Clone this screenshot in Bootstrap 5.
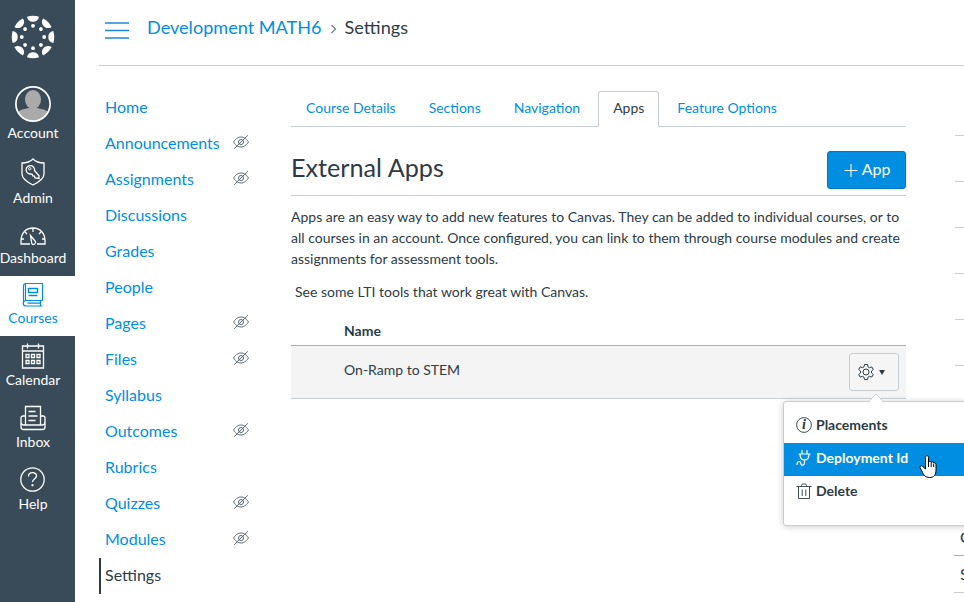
<!DOCTYPE html>
<html lang="en">
<head>
<meta charset="utf-8">
<meta name="viewport" content="width=device-width, initial-scale=1">
<title>Development MATH6: Settings</title>
<link href="https://cdn.jsdelivr.net/npm/bootstrap@5.3.0/dist/css/bootstrap.min.css" rel="stylesheet">
<style>
:root{--ink:#2d3b45;--brand:#008ee2;--line:#c7cdd1}
body{font-family:Lato,"Liberation Sans",sans-serif;color:var(--ink);font-size:14px;line-height:21px}
a{text-decoration:none;color:var(--brand)}
.page{width:964px;height:602px}
.rail{width:75px;background:#394b58}
.rail-item{height:62px;padding-top:6px;padding-right:9px;color:#fff;font-size:14px;line-height:18px}
.rail-item .pic{height:29px}
.rail-logo{height:82px;padding:15px 9px 0 0}
.rail-account{height:72px;padding-top:4px}
.rail-account .pic{height:38px}
.rail-admin{height:60px;padding-top:3px}
.rail-admin .pic{height:32px}
.rail-courses{height:60px;background:#fff;color:var(--brand);padding-top:5px}
.rail-courses .pic{height:28px}
.work{padding-left:24px}
.topbar{height:66px;border-bottom:1px solid var(--line);padding:0 0 9px 6px}
.crumbs{font-size:18.1px;line-height:24px;margin-left:18px;padding-bottom:2px}
.course-nav{width:192px;padding-top:24px}
.course-nav a{height:36px;padding:0 41px 4px 6px;font-size:16px}
.course-nav .current{border-left:2px solid var(--ink);padding-left:4px;color:var(--ink)}
.course-nav .eye{color:#5c6872;margin-bottom:1px}
.panel{width:615px;padding-top:25px}
.settings-tabs{height:36px;border-bottom:1px solid var(--line)}
.settings-tabs .nav-link{height:36px;padding:0 14px;border:1px solid transparent;border-radius:3px 3px 0 0;color:var(--brand);margin-right:3px;line-height:31px}
.settings-tabs .nav-link.active{color:var(--ink);border-color:var(--line);border-bottom-color:#fff;background:#fff}
.title-row{height:69px;padding-bottom:6px;border-bottom:1px solid var(--line)}
.title-row h1{font-size:25.2px;line-height:30px;margin:0 0 7px}
.btn-app{width:79px;height:38px;background:var(--brand);border:1px solid #0079c1;color:#fff;border-radius:3px;font-size:16px;padding:0 0 3px 1px}
.intro{margin:10px 0 12px}
.tool-head{height:44px;padding:18px 0 0 53px;font-weight:700;border-bottom:1px solid #a5afb5}
.tool-row{height:53px;background:#f4f4f4;border-bottom:1px solid var(--line);padding:7px 7px 0 53px}
.tool-name{padding-top:6px}
.gear-btn{width:50px;height:38px;border:1px solid var(--line);border-radius:3px;background:#f5f5f5;padding:0 7px 0 0;gap:4px}
.caret{border:3.5px solid transparent;border-top:5.5px solid var(--ink);border-bottom:0}
.gear-menu{left:783px;top:401px;width:190px;height:125px;background:#fff;border:1px solid var(--line);border-radius:3px;box-shadow:0 1px 6px rgba(0,0,0,.2);padding-top:8px;z-index:2}
.gear-menu a{height:33px;padding:0 0 4px 12px;color:var(--ink);font-weight:700;gap:4px}
.gear-menu .hot{background:var(--brand);color:#fff}
.gear-menu a svg{margin-top:1px}
.menu-tip{left:84px;top:-9px}
.info-i{font:italic bold 14px "Liberation Serif",serif}
.cursor{left:919px;top:454px;z-index:3}
.side-links{width:10px;margin-left:49px;padding-top:24px}
.side-links span{height:46px;border-bottom:1px solid var(--line)}
.side-usage{width:11px;margin:153px 0 0 -1px;font-size:16px}
.side-usage div{height:37px;line-height:36px;padding-left:6px;border-bottom:1px solid var(--line)}
.side-usage div:first-child{border-color:#a5afb5}
svg{display:block;fill:none;flex:none}
svg:not([stroke]){stroke:currentColor}
</style>
</head>
<body>
<div class="page d-flex overflow-hidden position-relative">
  <nav class="rail d-flex flex-column flex-shrink-0">
    <a class="rail-logo d-flex justify-content-center text-white" href="#" aria-label="Canvas">
      <svg width="44" height="44" viewBox="-22 -22 44 44" stroke="none">
        <defs><g id="petal"><path fill="#fff" d="M-6-20.300Q0-22.200 6-20.300C5.500-17 3-15.300 0-15.300S-5.500-17-6-20.300Z"/><circle cy="-11.200" r="1.900" fill="#fff"/></g></defs>
        <use href="#petal"/><use href="#petal" transform="rotate(45)"/><use href="#petal" transform="rotate(90)"/><use href="#petal" transform="rotate(135)"/><use href="#petal" transform="rotate(180)"/><use href="#petal" transform="rotate(225)"/><use href="#petal" transform="rotate(270)"/><use href="#petal" transform="rotate(315)"/>
      </svg>
    </a>
    <a class="rail-item rail-account d-flex flex-column align-items-center" href="#">
      <span class="pic"><svg width="36" height="36" viewBox="0 0 36 36"><g stroke="none" fill="#aaa"><ellipse cx="18" cy="13.500" rx="8" ry="9.500"/><path d="M14 20h8v2c4 1 8 1 11 4A17 17 0 0 1 3 26c3-3 7-3 11-4z"/></g><circle cx="18" cy="18" r="17.100" stroke-width="1.700"/></svg></span>
      <span>Account</span>
    </a>
    <a class="rail-item rail-admin d-flex flex-column align-items-center" href="#">
      <span class="pic"><svg width="26" height="30" viewBox="0 0 26 30" stroke-width="1.300"><path d="M13 2C10 5 6 6 2 6v11c0 5 5 8 11 11 6-3 11-6 11-11V6C20 6 16 5 13 2Z"/><path d="M14.500 13.500a4.200 4.200 0 1 0-4.200 3.500l2 .3.500 1.700 1.700.2.500 1.800 4 .5v-2.700Z" stroke-width="1.300"/><circle cx="9.700" cy="11.700" r="1.200" stroke-width="1"/></svg></span>
      <span>Admin</span>
    </a>
    <a class="rail-item d-flex flex-column align-items-center" href="#">
      <span class="pic pt-1"><svg width="28" height="22" viewBox="0 0 28 22" stroke-width="1.300"><path d="M11 20H2v-3C2 9 7 4 14 4s12 5 12 13v3h-8M14 4v4M6 8l2 2M22 8l-2 2M2 15h3M23 15h3"/><path d="M11.500 11.500l5 6c.7 2.700-2.300 3.900-3.700 2.200Z"/></svg></span>
      <span>Dashboard</span>
    </a>
    <a class="rail-item rail-courses d-flex flex-column align-items-center" href="#">
      <span class="pic"><svg width="22" height="26" viewBox="0 0 22 26" stroke-width="1.200"><path d="M20.500 19.500H4a2.700 2.700 0 0 0 0 5.500h16.500M18.500 19.500V25M20.500 19.500v-17H4c-1.700 0-2.500 1-2.500 2.500V22M3.500 2.700v16.800M5.500 22.200h13"/><path d="M6.500 7.500h9v4h-9zM6.500 14.500h9" stroke-width="1.500"/></svg></span>
      <span>Courses</span>
    </a>
    <a class="rail-item d-flex flex-column align-items-center" href="#">
      <span class="pic"><svg width="24" height="28" viewBox="0 0 24 28" stroke-width="1.300"><path d="M1.500 4h21v22h-21zM1.500 9h21M6.500 1.500v5M17.500 1.500v5"/><path d="M5 12.500h3v3H5zM10.500 12.500h3v3h-3zM16 12.500h3v3h-3zM5 18.500h3v3H5zM10.500 18.500h3v3h-3zM16 18.500h3v3h-3z"/></svg></span>
      <span>Calendar</span>
    </a>
    <a class="rail-item d-flex flex-column align-items-center" href="#">
      <span class="pic"><svg width="28" height="28" viewBox="0 0 28 28" stroke-width="1.300"><path d="M6.500 21V2.500h15V21M6.500 12H4c-1.300 0-2 1-2 2v9c0 1.500 1 2.500 2.500 2.500h19c1.500 0 2.500-1 2.500-2.500v-9c0-1-.7-2-2-2h-2.500M2 17.500c0 2.500 1 3.500 3 3.500h18c2 0 3-1 3-3.500M9.500 7.500h7M9.500 12h9M9.500 16.500h7"/></svg></span>
      <span>Inbox</span>
    </a>
    <a class="rail-item d-flex flex-column align-items-center" href="#">
      <span class="pic"><svg width="26" height="26" viewBox="0 0 26 26" stroke-width="1.300"><circle cx="12.500" cy="13.500" r="11.700"/><path d="M8.500 10.500c0-5 8-5 8-.7 0 3.200-4 3.200-4 6.200"/><circle cx="12.500" cy="19.200" r=".9" fill="currentColor" stroke-width=".5"/></svg></span>
      <span>Help</span>
    </a>
  </nav>

  <div class="work flex-grow-1">
    <header class="topbar d-flex align-items-center">
      <svg class="mt-1" width="24" height="18" viewBox="0 0 24 18" stroke="#1f87dd" stroke-width="1.400"><path d="M0 2h24M0 9.500h24M0 17h24"/></svg>
      <div class="crumbs d-flex align-items-center"><a href="#">Development MATH6</a>
        <svg class="mx-2 mt-1" width="7" height="10" viewBox="0 0 7 10" stroke="#6b7780" stroke-width="1.100"><path d="M1.500 1l4 4-4 4"/></svg>
        <span>Settings</span></div>
    </header>
    <div class="d-flex">
      <nav class="course-nav d-flex flex-column flex-shrink-0">
        <svg width="0" height="0" class="position-absolute"><symbol id="hidden-eye" viewBox="0 0 18 16"><path d="M1.500 8C4 4.300 6.500 3 9 3S14 4.300 16.500 8C14 11.700 11.500 13 9 13S4 11.700 1.500 8Z"/><circle cx="9" cy="8" r="2.500"/><path d="M7.800 9.200L10.200 6.800M2.200 14.700L15.800 1.300"/></symbol></svg>
        <a class="d-flex align-items-center justify-content-between" href="#">Home</a>
        <a class="d-flex align-items-center justify-content-between" href="#">Announcements<svg width="18" height="16" class="eye"><use href="#hidden-eye"/></svg></a>
        <a class="d-flex align-items-center justify-content-between" href="#">Assignments<svg width="18" height="16" class="eye"><use href="#hidden-eye"/></svg></a>
        <a class="d-flex align-items-center justify-content-between" href="#">Discussions</a>
        <a class="d-flex align-items-center justify-content-between" href="#">Grades</a>
        <a class="d-flex align-items-center justify-content-between" href="#">People</a>
        <a class="d-flex align-items-center justify-content-between" href="#">Pages<svg width="18" height="16" class="eye"><use href="#hidden-eye"/></svg></a>
        <a class="d-flex align-items-center justify-content-between" href="#">Files<svg width="18" height="16" class="eye"><use href="#hidden-eye"/></svg></a>
        <a class="d-flex align-items-center justify-content-between" href="#">Syllabus</a>
        <a class="d-flex align-items-center justify-content-between" href="#">Outcomes<svg width="18" height="16" class="eye"><use href="#hidden-eye"/></svg></a>
        <a class="d-flex align-items-center justify-content-between" href="#">Rubrics</a>
        <a class="d-flex align-items-center justify-content-between" href="#">Quizzes<svg width="18" height="16" class="eye"><use href="#hidden-eye"/></svg></a>
        <a class="d-flex align-items-center justify-content-between" href="#">Modules<svg width="18" height="16" class="eye"><use href="#hidden-eye"/></svg></a>
        <a class="current d-flex align-items-center justify-content-between" href="#">Settings</a>
      </nav>
      <main class="panel flex-shrink-0">
        <div class="settings-tabs nav flex-nowrap">
          <a class="nav-link" href="#">Course Details</a>
          <a class="nav-link" href="#">Sections</a>
          <a class="nav-link" href="#">Navigation</a>
          <a class="nav-link active" href="#">Apps</a>
          <a class="nav-link" href="#">Feature Options</a>
        </div>
        <div class="title-row d-flex justify-content-between align-items-end">
          <h1 class="fw-normal">External Apps</h1>
          <button class="btn-app btn d-flex align-items-center justify-content-center gap-1" type="button"><svg class="mt-1" width="14" height="14" viewBox="0 0 14 14" stroke-width="1.100"><path d="M.5 6.500h13M7 0v13"/></svg>App</button>
        </div>
        <p class="intro">Apps are an easy way to add new features to Canvas. They can be added to individual courses, or to<br>all courses in an account. Once configured, you can link to them through course modules and create<br>assignments for assessment tools.</p>
        <p class="mb-0 ps-1">See some LTI tools that work great with Canvas.</p>
        <div class="tool-head">Name</div>
        <div class="tool-row d-flex justify-content-between align-items-start">
          <span class="tool-name">On-Ramp to STEM</span>
          <button class="gear-btn d-flex align-items-center justify-content-center" type="button" aria-label="Actions"><svg width="18" height="18" viewBox="0 0 18 18" stroke="#2d3b45" stroke-width="1"><circle cx="9" cy="9" r="3"/><path d="M7.500 1.500h3l.5 2.300 1.500.9 2.300-.8 1.500 2.600L14.500 8v2l1.800 1.500-1.500 2.600-2.300-.8-1.500.9-.5 2.300h-3L7 14.200l-1.500-.9-2.300.8-1.500-2.600L3.500 10V8L1.700 6.500l1.500-2.600 2.300.8L7 3.800Z"/></svg><span class="caret"></span></button>
        </div>
      </main>
      <aside class="side-links d-flex flex-column flex-shrink-0">
        <span></span><span></span><span></span><span></span><span></span><span></span>
        <div class="side-usage"><div>C</div><div>S</div></div>
      </aside>
    </div>
  </div>

  <div class="gear-menu position-absolute">
    <svg class="menu-tip position-absolute" width="16" height="10" viewBox="0 0 16 10" stroke="#c7cdd1"><path d="M0 9.500L8 1l8 8.500" fill="#fff" stroke-linejoin="round"/></svg>
    <a class="d-flex align-items-center" href="#"><svg width="16" height="16" viewBox="0 0 16 16" stroke-width=".9"><circle cx="8" cy="8" r="7.400"/><text class="info-i" x="8" y="12.300" text-anchor="middle" fill="currentColor" stroke="none">i</text></svg>Placements</a>
    <a class="hot d-flex align-items-center" href="#"><svg width="16" height="16" viewBox="0 0 16 16" stroke-width="1.200"><path d="M2.500 4h12M4 4c0 4 1.500 6 4.500 6S13 8 13 4M6 4V0M11 4V0M8.500 10v2.500c0 3.500-3.700 3.300-3.700.8s-3.800-2.300-3.800.7V15"/></svg>Deployment Id</a>
    <a class="d-flex align-items-center" href="#"><svg width="16" height="16" viewBox="0 0 16 16" stroke-width=".9"><path d="M.5 3.500h15M2.500 3.500v12h11v-12M5.500 3.500v-1q0-1.500 1.500-1.500h2q1.500 0 1.500 1.500v1M6.200 6.500v6.500M9.800 6.500v6.500"/></svg>Delete</a>
  </div>
  <svg class="cursor position-absolute" width="18" height="25" viewBox="0 0 18 25" stroke="#000"><path fill="#fff" d="M6.500 15V3.500c0-2.500 3-2.500 3 0V8c.5-1 2.500-1 2.700.5.700-1 2.300-.7 2.500.7.900-.7 2.300-.2 2.300 1.300V16c0 5-2 7.500-6.500 7.500-4 0-5.500-2-7-5L1.200 14c-.7-2 1.300-3 2.700-1.300Z"/><path d="M9.500 8v5M12.200 9v4M14.700 10v3"/></svg>
</div>
<script src="https://cdn.jsdelivr.net/npm/bootstrap@5.3.0/dist/js/bootstrap.bundle.min.js"></script>
</body>
</html>
